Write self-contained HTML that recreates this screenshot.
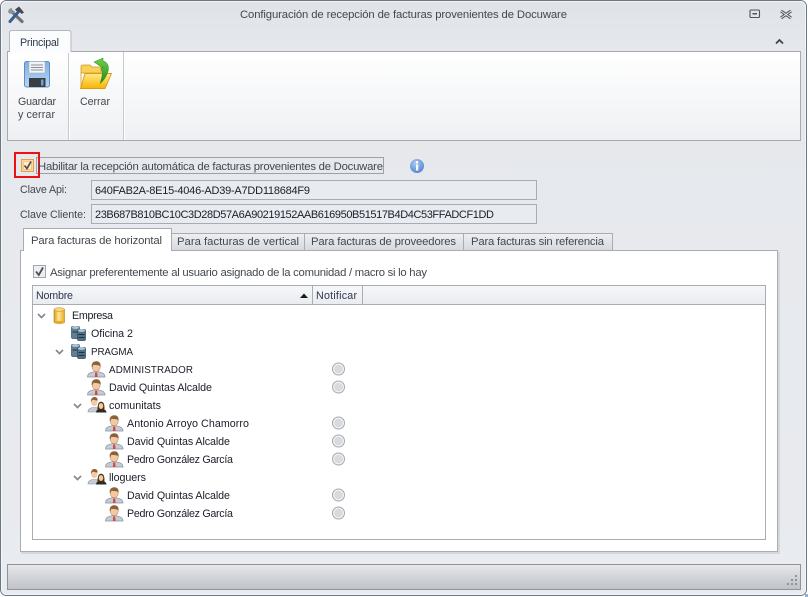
<!DOCTYPE html>
<html><head><meta charset="utf-8"><title>Configuración</title>
<style>
html,body{margin:0;padding:0;background:#fff}
svg{display:block}
text{font-family:"Liberation Sans","DejaVu Sans",sans-serif;font-size:11.3px;fill:#1a1e28;white-space:pre}
text.t{font-size:10.7px}
.g{fill:#43474f}
.b{fill:#2f3850}
</style></head><body>
<svg width="808" height="597" viewBox="0 0 808 597" xmlns="http://www.w3.org/2000/svg">
<defs>
<linearGradient id="win" x1="0" y1="0" x2="0" y2="1"><stop offset="0" stop-color="#dfe3e7"/><stop offset=".09" stop-color="#e6e8ec"/><stop offset="1" stop-color="#e8ebef"/></linearGradient>
<linearGradient id="rib" x1="0" y1="0" x2="0" y2="1"><stop offset="0" stop-color="#ffffff"/><stop offset="1" stop-color="#eef0f3"/></linearGradient>
<linearGradient id="stat" x1="0" y1="0" x2="0" y2="1"><stop offset="0" stop-color="#e6e8eb"/><stop offset="1" stop-color="#bfc2c6"/></linearGradient>
<linearGradient id="tab" x1="0" y1="0" x2="0" y2="1"><stop offset="0" stop-color="#eef0f3"/><stop offset="1" stop-color="#d5d8dd"/></linearGradient>
<linearGradient id="hdr" x1="0" y1="0" x2="0" y2="1"><stop offset="0" stop-color="#f6f7f9"/><stop offset="1" stop-color="#e9ecf0"/></linearGradient>
<linearGradient id="fold" x1="0" y1="0" x2="0" y2="1"><stop offset="0" stop-color="#ffe98a"/><stop offset="1" stop-color="#f7b500"/></linearGradient>
<linearGradient id="cyl" x1="0" y1="0" x2="1" y2="0"><stop offset="0" stop-color="#d99a1c"/><stop offset=".45" stop-color="#ffe79a"/><stop offset="1" stop-color="#e5a924"/></linearGradient>
<linearGradient id="flop" x1="0" y1="0" x2="0" y2="1"><stop offset="0" stop-color="#7fb0e4"/><stop offset="1" stop-color="#b9d4f0"/></linearGradient>
<linearGradient id="arr" x1="0" y1="0" x2="0" y2="1"><stop offset="0" stop-color="#6fd04a"/><stop offset="1" stop-color="#1f8a1c"/></linearGradient>
<radialGradient id="inf" cx=".4" cy=".3" r=".8"><stop offset="0" stop-color="#a9c8f0"/><stop offset="1" stop-color="#4d80cf"/></radialGradient>
<g id="user">
<path d="M0.500 16 C0.500 12.500 3.500 11.500 6.500 10.800 L11.500 10.800 C14.500 11.500 18 12.500 18 16 Z" fill="#c6ccd6" stroke="#8a909c" stroke-width=".7"/>
<path d="M8.200 11.500 L10.200 11.500 L10.600 16 L7.800 16 Z" fill="#d8474a"/>
<ellipse cx="9.200" cy="6" rx="4" ry="4.800" fill="#f2c9a0" stroke="#a87a4c" stroke-width=".5"/>
<path d="M4.800 6.500 C4 1.600 7 .3 9.500 .3 C12.300 .3 14 2.400 13.600 5.500 C11.800 3.600 8 4.400 6.600 3.600 C6 4.700 5.600 5.600 4.800 6.500 Z" fill="#8a6238"/>
</g>
<g id="group">
<path d="M0 15 C0 12 2 11 4.500 10.500 L8 10.500 C10 11 11.500 12 11.500 15 Z" fill="#c6ccd6" stroke="#8a909c" stroke-width=".6"/>
<ellipse cx="6.300" cy="5" rx="3.200" ry="4" fill="#f2c9a0"/>
<path d="M2.900 5 C2.700 1 5 0 6.500 0 C8.700 0 9.900 1.500 9.600 3.800 C8 2.800 5.500 3.200 4.500 2.700 Z" fill="#8a6238"/>
<path d="M8 15.500 C8 13 10 12.300 12 12 L14 12 C16 12.300 18.500 13 18.500 15.500 Z" fill="#2e2a26"/>
<path d="M9.500 13 C9.300 6.500 11 4.800 13 4.800 C15.200 4.800 16.800 6.500 16.400 13 Z" fill="#4a2f10"/>
<ellipse cx="13" cy="9" rx="2.300" ry="3" fill="#f2c9a0"/>
</g>
<g id="srv">
<rect x="0.500" y="1.500" width="8" height="12" rx="1.200" fill="#5f7f96" stroke="#3c4f60" stroke-width=".7"/>
<rect x="6.500" y="4.500" width="8" height="11" rx="1.200" fill="#4f7188" stroke="#33475a" stroke-width=".7"/>
<ellipse cx="4.500" cy="2.500" rx="3.700" ry="1.500" fill="#a9c4d6"/>
<ellipse cx="10.500" cy="5.500" rx="3.700" ry="1.500" fill="#a9c4d6"/>
<path d="M1.500 7H6M7.500 9.500H13.500M7.500 12.500H13.500" stroke="#22323f" stroke-width="1"/>
</g>
<g id="radio">
<circle cx="0" cy="0" r="6" fill="#f0f1f3" stroke="#a4a8b0" stroke-width="1"/>
<circle cx="0" cy="0" r="4.300" fill="#d9dadc"/>
</g>
<path id="chev" d="M0 0 L3.500 3.500 L7 0" fill="none" stroke="#85898f" stroke-width="1.700"/>
</defs>

<!-- window -->
<rect x="0.500" y="0.500" width="806" height="595" rx="6" fill="url(#win)" stroke="#6a7785"/>
<rect x="1.500" y="1.500" width="804" height="593" rx="5" fill="none" stroke="#f4f5f7"/>
<rect x="805" y="594" width="3" height="3" fill="#8fb4d8"/>

<!-- title -->
<text x="240" y="18" class="g" textLength="327" lengthAdjust="spacing">Configuración de recepción de facturas provenientes de Docuware</text>
<!-- tools icon -->
<g>
<path d="M11 11 L22 21.500" stroke="#6a727a" stroke-width="3.200" stroke-linecap="round"/>
<path d="M20 10 L10 21.500" stroke="#3a5f8a" stroke-width="3" stroke-linecap="round"/>
<path d="M15 9.500 L19 6.500 L24 12.500 L21.500 14 L19.500 11.500 L17 11.500 Z" fill="#42484f"/>
<path d="M8.500 13 C7.500 10 9.500 8 12.500 8 L11 10 L13 12 L14.500 10.500 C15 13 12.500 15 8.500 13Z" fill="#8a929a"/>
</g>
<!-- window buttons -->
<rect x="750" y="10" width="9.500" height="7.500" rx="1" fill="none" stroke="#50555c" stroke-width="1.100"/>
<rect x="752.500" y="13" width="4.500" height="1.500" fill="#50555c"/>
<path d="M781 11 L791 18 M791 11 L781 18" stroke="#50555c" stroke-width="3"/>
<path d="M781 11 L791 18 M791 11 L781 18" stroke="#eef0f2" stroke-width="1"/>
<path d="M776 43.500 L779.500 40 L783 43.500" fill="none" stroke="#40454c" stroke-width="1.800"/>

<!-- ribbon -->
<rect x="7.500" y="51.500" width="793" height="89" fill="url(#rib)" stroke="#a6a9ae"/>
<path d="M68.500 52V140M123.500 52V140" stroke="#c6c9ce"/>
<path d="M69.500 52V140M124.500 52V140" stroke="#fff"/>
<path d="M9.500 52 V33 Q9.500 30.500 12 30.500 H68.500 Q71 30.500 71 33 V52" fill="#fbfcfd" stroke="#b4b8be"/>
<rect x="10" y="50" width="60.500" height="3" fill="#fbfcfd"/>
<text x="20" y="46" class="b t" textLength="39" lengthAdjust="spacing">Principal</text>

<!-- floppy -->
<rect x="24.500" y="61.500" width="25" height="25.500" rx="2" fill="url(#flop)" stroke="#5e8ec4"/>
<rect x="29" y="61.500" width="16" height="11.500" fill="#f2f4f7" stroke="#9fb1c6" stroke-width=".6"/>
<path d="M31 65H43M31 67.500H43M31 70H43" stroke="#8a8f96" stroke-width=".9"/>
<rect x="29" y="78" width="16.500" height="9" fill="#3a3d42"/>
<rect x="41" y="79.500" width="2.500" height="6" fill="#6ea2dc"/>
<text x="18" y="105" class="g t" textLength="38" lengthAdjust="spacing">Guardar</text>
<text x="18" y="118" class="g t" textLength="37" lengthAdjust="spacing">y cerrar</text>

<!-- folder -->
<path d="M81 88.500 V67 Q81 65 83 65 H90 L92 67 H101 V73 H81 Z" fill="#f7d15d" stroke="#d49a18" stroke-width=".8"/>
<path d="M80.500 88.500 L85 73.500 H111.500 L105 88.500 Z" fill="url(#fold)" stroke="#d99c12" stroke-width=".9"/>
<path d="M94 62 L103 58 L103 61 C108 62 110 68 107 74 C105 79 102 82 100 83.500 C102 78 103 73 101.500 70 C101 68.500 102 67.500 103 67 L103 68 Z" fill="url(#arr)" stroke="#2e7f1a" stroke-width=".5"/>
<text x="80" y="105" class="g t" textLength="30" lengthAdjust="spacing">Cerrar</text>

<!-- checkbox row -->
<rect x="36.500" y="157.500" width="347" height="16" fill="none" stroke="#55585e" stroke-dasharray="1 1"/>
<rect x="21.500" y="159.500" width="12" height="12" fill="#ffd89a" stroke="#e0a04e"/>
<rect x="23.500" y="161.500" width="8" height="8" fill="#ffeccb" stroke="#f5c680"/>
<path d="M24.500 165.500 L27 168.500 L31 161.500" fill="none" stroke="#4a4d53" stroke-width="1.700"/>
<rect x="15" y="153" width="24" height="24" fill="none" stroke="#ee1111" stroke-width="2"/>
<text x="38" y="170" class="g" textLength="345" lengthAdjust="spacing">Habilitar la recepción automática de facturas provenientes de Docuware</text>
<circle cx="417" cy="166" r="7" fill="url(#inf)"/>
<circle cx="417" cy="162.300" r="1.300" fill="#fff"/>
<rect x="416" y="164.500" width="2.200" height="6" fill="#fff"/>

<!-- fields -->
<text x="20" y="193" class="g t" textLength="47" lengthAdjust="spacing">Clave Api:</text>
<text x="20" y="218" class="g t" textLength="66" lengthAdjust="spacing">Clave Cliente:</text>
<rect x="91.500" y="180.500" width="445" height="19" fill="#e8ebef" stroke="#a9adb3"/>
<rect x="91.500" y="204.500" width="445" height="19" fill="#e8ebef" stroke="#a9adb3"/>
<text x="95" y="194" textLength="215" lengthAdjust="spacing" style="font-size:11px">640FAB2A-8E15-4046-AD39-A7DD118684F9</text>
<text x="95" y="218" textLength="399" lengthAdjust="spacing" style="font-size:11px">23B687B810BC10C3D28D57A6A90219152AAB616950B51517B4D4C53FFADCF1DD</text>

<!-- tabs -->
<rect x="171.500" y="233.500" width="133" height="17" fill="url(#tab)" stroke="#a9adb3"/>
<rect x="304.500" y="233.500" width="159" height="17" fill="url(#tab)" stroke="#a9adb3"/>
<rect x="463.500" y="233.500" width="149" height="17" fill="url(#tab)" stroke="#a9adb3"/>
<text x="177" y="245" class="g" textLength="122" lengthAdjust="spacing">Para facturas de vertical</text>
<text x="311" y="245" class="g" textLength="145" lengthAdjust="spacing">Para facturas de proveedores</text>
<text x="471" y="245" class="g" textLength="133" lengthAdjust="spacing">Para facturas sin referencia</text>

<!-- page -->
<rect x="21" y="252" width="759" height="302" fill="#d5d7db"/>
<rect x="20.500" y="250.500" width="757" height="301" fill="#fff" stroke="#a9adb3"/>
<path d="M23.500 251 V228.500 H171.500 V251" fill="#fff" stroke="#a9adb3"/>
<rect x="24" y="249" width="147" height="3" fill="#fff"/>
<text x="31" y="244" class="g" textLength="131" lengthAdjust="spacing">Para facturas de horizontal</text>

<rect x="33.500" y="265.500" width="12" height="12" fill="#eceef1" stroke="#a3a7ad"/>
<path d="M36 271.500 L38.800 275 L43 267.500" fill="none" stroke="#4a4e54" stroke-width="1.800"/>
<text x="50" y="276" class="g" textLength="377" lengthAdjust="spacing">Asignar preferentemente al usuario asignado de la comunidad / macro si lo hay</text>

<!-- grid -->
<rect x="32.500" y="285.500" width="733" height="254" fill="#fff" stroke="#a9adb3"/>
<rect x="33" y="286" width="732" height="18" fill="url(#hdr)"/>
<path d="M33 304.500H765" stroke="#a9adb3"/>
<path d="M312.500 286V304M362.500 286V304" stroke="#a9adb3"/>
<text x="36" y="299" class="b t" textLength="37" lengthAdjust="spacing">Nombre</text>
<text x="316" y="299" class="b t" textLength="41" lengthAdjust="spacing">Notificar</text>
<path d="M300 298 L304 293.500 L308 298 Z" fill="#1a1a1a"/>

<!-- tree -->
<use href="#chev" x="38" y="314"/>
<g>
<rect x="54" y="309.500" width="10.500" height="13" fill="url(#cyl)" stroke="#b98516" stroke-width=".6"/>
<ellipse cx="59.250" cy="309.500" rx="5.250" ry="1.800" fill="#f8d77a" stroke="#b98516" stroke-width=".5"/>
<ellipse cx="59.250" cy="322.500" rx="5.250" ry="1.500" fill="#e5a924"/>
</g>
<text x="72" y="319" class="t" textLength="41" lengthAdjust="spacing">Empresa</text>

<use href="#srv" x="71" y="325"/>
<text x="91" y="337" class="t" textLength="42" lengthAdjust="spacing">Oficina 2</text>

<use href="#chev" x="56" y="350"/>
<use href="#srv" x="71" y="343"/>
<text x="91" y="355" class="t" textLength="42" style="font-size:9.8px" lengthAdjust="spacing">PRAGMA</text>

<use href="#user" x="87" y="361"/>
<text x="109" y="373" class="t" textLength="84" style="font-size:9.8px" lengthAdjust="spacing">ADMINISTRADOR</text>
<use href="#radio" x="338.500" y="369"/>

<use href="#user" x="87" y="379"/>
<text x="109" y="391" class="t" textLength="103" lengthAdjust="spacing">David Quintas Alcalde</text>
<use href="#radio" x="338.500" y="387"/>

<use href="#chev" x="74" y="404"/>
<use href="#group" x="88" y="397"/>
<text x="109" y="409" class="t" textLength="52" lengthAdjust="spacing">comunitats</text>

<use href="#user" x="105" y="415"/>
<text x="127" y="427" class="t" textLength="122" lengthAdjust="spacing">Antonio Arroyo Chamorro</text>
<use href="#radio" x="338.500" y="423"/>

<use href="#user" x="105" y="433"/>
<text x="127" y="445" class="t" textLength="103" lengthAdjust="spacing">David Quintas Alcalde</text>
<use href="#radio" x="338.500" y="441"/>

<use href="#user" x="105" y="451"/>
<text x="127" y="463" class="t" textLength="106" lengthAdjust="spacing">Pedro González García</text>
<use href="#radio" x="338.500" y="459"/>

<use href="#chev" x="74" y="476"/>
<use href="#group" x="88" y="469"/>
<text x="109" y="481" class="t" textLength="37" lengthAdjust="spacing">lloguers</text>

<use href="#user" x="105" y="487"/>
<text x="127" y="499" class="t" textLength="103" lengthAdjust="spacing">David Quintas Alcalde</text>
<use href="#radio" x="338.500" y="495"/>

<use href="#user" x="105" y="505"/>
<text x="127" y="517" class="t" textLength="106" lengthAdjust="spacing">Pedro González García</text>
<use href="#radio" x="338.500" y="513"/>

<!-- status -->
<rect x="7.500" y="564.500" width="793" height="25" fill="url(#stat)" stroke="#8f9297"/>
<g fill="#8f9399">
<rect x="795" y="575" width="2" height="2"/>
<rect x="795" y="579" width="2" height="2"/>
<rect x="791" y="579" width="2" height="2"/>
<rect x="795" y="583" width="2" height="2"/>
<rect x="791" y="583" width="2" height="2"/>
<rect x="787" y="583" width="2" height="2"/>
</g>
</svg>
</body></html>
